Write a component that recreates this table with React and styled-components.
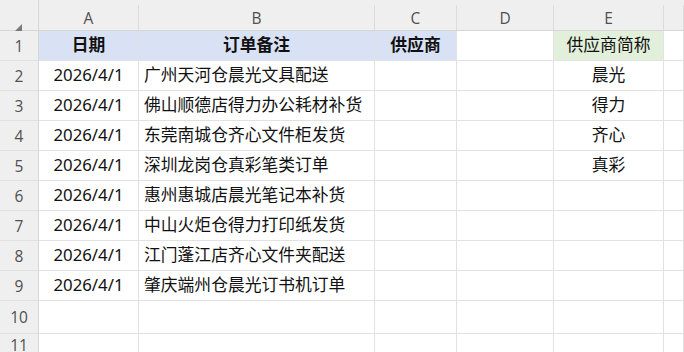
import styled, { createGlobalStyle } from "styled-components"

const GlobalStyle = createGlobalStyle`
  html, body {
    margin: 0;
    padding: 0;
    background: #ffffff;
  }
  * {
    box-sizing: border-box;
  }
`

const columns = ["A", "B", "C", "D", "E", ""]

const rows = [
  { date: "2026/4/1", note: "广州天河仓晨光文具配送", short: "晨光" },
  { date: "2026/4/1", note: "佛山顺德店得力办公耗材补货", short: "得力" },
  { date: "2026/4/1", note: "东莞南城仓齐心文件柜发货", short: "齐心" },
  { date: "2026/4/1", note: "深圳龙岗仓真彩笔类订单", short: "真彩" },
  { date: "2026/4/1", note: "惠州惠城店晨光笔记本补货", short: "" },
  { date: "2026/4/1", note: "中山火炬仓得力打印纸发货", short: "" },
  { date: "2026/4/1", note: "江门蓬江店齐心文件夹配送", short: "" },
  { date: "2026/4/1", note: "肇庆端州仓晨光订书机订单", short: "" },
]

// Sheet grid
const Sheet = styled.div`
  display: grid;
  grid-template-columns: 39px 100px 236px 82px 97px 110px 1fr;
  grid-template-rows: 31px repeat(9, 30px) 33px 1fr;
  width: 684px;
  height: 352px;
  overflow: hidden;
  font-family: "Noto Sans", "Noto Sans CJK SC", sans-serif;
  color: #111111;
`

const Corner = styled.div`
  background: #efefef;
  border-right: 1px solid #d6d6d6;
  border-bottom: 1px solid #d6d6d6;
  padding: 15px 0 0 14px;
`

const ColHead = styled.div`
  background: #efefef;
  padding-top: 5px;
  border-bottom: 1px solid #d6d6d6;
`

const Letter = styled.div`
  height: 100%;
  border-right: 1px solid #dcdcdc;
  display: flex;
  align-items: center;
  justify-content: center;
  font-family: "Open Sans", "Noto Sans", sans-serif;
  font-size: 15.5px;
  color: #505050;
`

const RowHead = styled.div`
  background: #efefef;
  border-right: 1px solid #d6d6d6;
  border-bottom: 1px solid #e0e0e0;
  display: flex;
  align-items: center;
  justify-content: center;
  font-family: "Open Sans", "Noto Sans", sans-serif;
  font-size: 15.5px;
  color: #505050;
`

const Cell = styled.div`
  border-right: 1px solid #e2e2e2;
  border-bottom: 1px solid #e2e2e2;
  background: ${(p) => p.$bg || "#ffffff"};
  display: flex;
  align-items: center;
  justify-content: ${(p) => (p.$left ? "flex-start" : "center")};
  padding: ${(p) => (p.$left ? "0 0 0 5px" : "0")};
  font-size: 16.8px;
  font-weight: ${(p) => (p.$bold ? 700 : 400)};
  white-space: nowrap;
  line-height: 1;
`

const CornerMark = () => (
  <svg width="8" height="8" viewBox="0 0 8 8">
    <polygon points="0,8 8,8 8,0" fill="#7a7a7a" />
  </svg>
)

const App = () => {
  return (
    <>
      <GlobalStyle />
      <Sheet>
        <Corner>
          <CornerMark />
        </Corner>
        {columns.map((c, i) => (
          <ColHead key={i}>
            <Letter>{c}</Letter>
          </ColHead>
        ))}

        <RowHead>1</RowHead>
        <Cell $bg="#d9e1f4" $bold>日期</Cell>
        <Cell $bg="#d9e1f4" $bold>订单备注</Cell>
        <Cell $bg="#d9e1f4" $bold>供应商</Cell>
        <Cell />
        <Cell $bg="#e2efda">供应商简称</Cell>
        <Cell />

        {rows.map((r, i) => (
          <Row key={i} num={i + 2} {...r} />
        ))}

        {[10, 11].map((n) => (
          <Row key={n} num={n} date="" note="" short="" />
        ))}
      </Sheet>
    </>
  )
}

const Row = ({ num, date, note, short }) => (
  <>
    <RowHead>{num}</RowHead>
    <Cell>{date}</Cell>
    <Cell $left>{note}</Cell>
    <Cell />
    <Cell />
    <Cell>{short}</Cell>
    <Cell />
  </>
)

export default App
